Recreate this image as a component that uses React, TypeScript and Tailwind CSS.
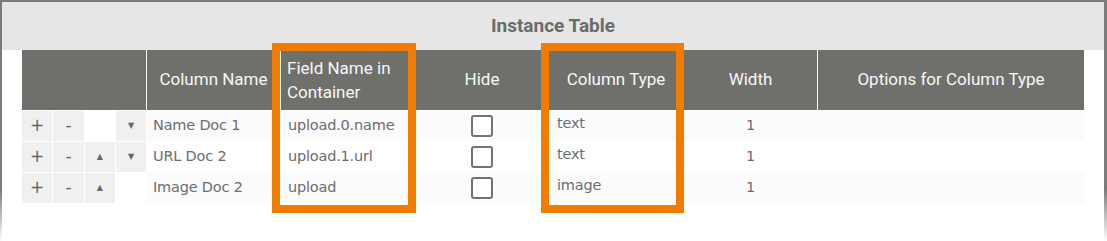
import React from "react";

type Row = {
  up: boolean;
  down: boolean;
  name: string;
  field: string;
  type: string;
  width: string;
  shaded: boolean;
};

const rows: Row[] = [
  { up: false, down: true, name: "Name Doc 1", field: "upload.0.name", type: "text", width: "1", shaded: true },
  { up: true, down: true, name: "URL Doc 2", field: "upload.1.url", type: "text", width: "1", shaded: false },
  { up: true, down: false, name: "Image Doc 2", field: "upload", type: "image", width: "1", shaded: true },
];

const cols = "grid grid-cols-[124px_133px_134px_132px_134px_133px_266px] gap-x-px";

function Btn({ children, small }: { children?: React.ReactNode; small?: boolean }) {
  return (
    <div
      className={`flex items-center justify-center bg-[#f0f0f0] text-[#666666] ${
        small ? "text-[8px]" : "text-[17px]"
      }`}
    >
      {children}
    </div>
  );
}

export default function App() {
  return (
    <div className="w-[1107px] h-[241px] bg-white overflow-hidden">
      <div className="relative h-full border-t-2 border-l-2 border-r-[3px] border-[#7b7b7b] [border-image:linear-gradient(to_bottom,#7b7b7b_78%,#ffffff)_1] font-['Roboto',sans-serif]">
        {/* Title bar */}
        <div className="h-[48px] bg-[#e6e6e6] flex items-center justify-center">
          <span className="text-[19px] font-bold text-[#6b6b6b]">Instance Table</span>
        </div>

        {/* Table */}
        <div className="pl-[20px]">
          <div className={`${cols} h-[60px] bg-white text-[17px] text-[#f7f7f7]`}>
            <div className="bg-[#6f706c]" />
            <div className="bg-[#6f706c] flex items-center justify-center">Column Name</div>
            <div className="bg-[#6f706c] flex flex-col justify-center pl-[6px] leading-[24px]">
              <span>Field Name in</span>
              <span>Container</span>
            </div>
            <div className="bg-[#6f706c] flex items-center justify-center">Hide</div>
            <div className="bg-[#6f706c] flex items-center justify-center">Column Type</div>
            <div className="bg-[#6f706c] flex items-center justify-center">Width</div>
            <div className="bg-[#6f706c] flex items-center justify-center">Options for Column Type</div>
          </div>

          <div className="flex flex-col gap-y-px pt-px font-['DejaVu_Sans',sans-serif] text-[14.5px] tracking-[-0.2px] text-[#6d6d6d]">
            {rows.map((r, i) => {
              const bg = r.shaded ? "bg-[#fbfbfb]" : "bg-white";
              return (
                <div key={i} className={`${cols} h-[30px]`}>
                  <div className="grid grid-cols-4 gap-x-px">
                    <Btn>+</Btn>
                    <Btn>-</Btn>
                    {r.up ? <Btn small>▲</Btn> : <div />}
                    {r.down ? <Btn small>▼</Btn> : <div />}
                  </div>
                  <div className={`${bg} flex items-center pl-[6px]`}>{r.name}</div>
                  <div className={`${bg} flex items-center pl-[7px]`}>{r.field}</div>
                  <div className={`${bg} flex items-center justify-center`}>
                    <div className="w-[22px] h-[22px] rounded-[3px] border-2 border-[#737373] bg-white" />
                  </div>
                  <div className={`${bg} flex items-start pl-[8px] pt-[2px]`}>{r.type}</div>
                  <div className={`${bg} flex items-center justify-center`}>{r.width}</div>
                  <div className={bg} />
                </div>
              );
            })}
          </div>
        </div>

        {/* Highlight boxes */}
        <div className="absolute left-[270px] top-[41px] w-[144px] h-[170px] border-[8px] border-[#f07d00]" />
        <div className="absolute left-[539px] top-[41px] w-[143px] h-[170px] border-[8px] border-[#f07d00]" />
      </div>
    </div>
  );
}
